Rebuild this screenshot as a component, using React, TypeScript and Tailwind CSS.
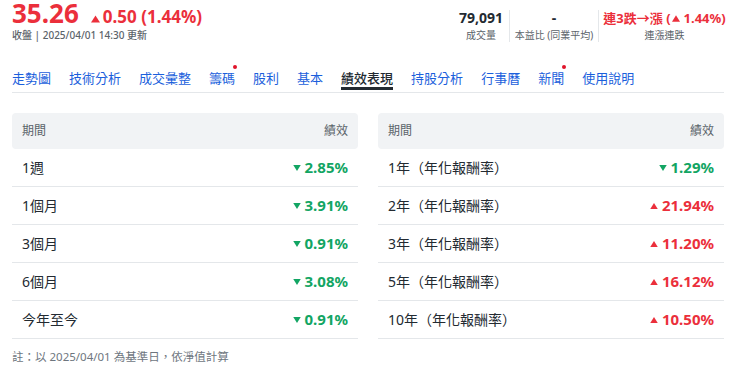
import React from "react";

const TABS = [
  { label: "走勢圖" },
  { label: "技術分析" },
  { label: "成交彙整" },
  { label: "籌碼", dot: true },
  { label: "股利" },
  { label: "基本" },
  { label: "績效表現", active: true },
  { label: "持股分析" },
  { label: "行事曆" },
  { label: "新聞", dot: true },
  { label: "使用說明" },
];

const LEFT_ROWS = [
  { period: "1週", value: "2.85%", up: false },
  { period: "1個月", value: "3.91%", up: false },
  { period: "3個月", value: "0.91%", up: false },
  { period: "6個月", value: "3.08%", up: false },
  { period: "今年至今", value: "0.91%", up: false },
];

const RIGHT_ROWS = [
  { period: "1年（年化報酬率）", value: "1.29%", up: false },
  { period: "2年（年化報酬率）", value: "21.94%", up: true },
  { period: "3年（年化報酬率）", value: "11.20%", up: true },
  { period: "5年（年化報酬率）", value: "16.12%", up: true },
  { period: "10年（年化報酬率）", value: "10.50%", up: true },
];

function Tri({ up, className }: { up: boolean; className?: string }) {
  return (
    <svg viewBox="0 0 10 8" className={className} fill="currentColor">
      {up ? <path d="M5 0L10 8H0z" /> : <path d="M0 0h10L5 8z" />}
    </svg>
  );
}

function PerfTable({ rows }: { rows: { period: string; value: string; up: boolean }[] }) {
  return (
    <div>
      <div className="flex items-center justify-between h-[36px] px-[10px] rounded-[4px] bg-[#f1f3f5] text-[12px] text-[#5b636a]">
        <span>期間</span>
        <span>績效</span>
      </div>
      {rows.map((r) => (
        <div
          key={r.period}
          className="flex items-center justify-between h-[38px] px-[10px] border-b border-[#e4e7ea]"
        >
          <span className="text-[14px] text-[#232a31]">{r.period}</span>
          <span
            className={`flex items-center gap-[4px] text-[15px] font-bold ${
              r.up ? "text-[#eb2f3b]" : "text-[#12a563]"
            }`}
          >
            <Tri up={r.up} className="w-[8px] h-[6px]" />
            {r.value}
          </span>
        </div>
      ))}
    </div>
  );
}

export default function App() {
  return (
    <div
      className="w-[740px] h-[389px] bg-white pl-3 pr-4"
      style={{ fontFamily: '"Noto Sans", "Noto Sans CJK TC", sans-serif' }}
    >
      {/* Quote header */}
      <div className="flex justify-between items-start h-[52px]">
        <div>
          <div className="flex items-baseline h-[26px] text-[#eb2f3b] font-bold">
            <span className="text-[26px] leading-[26px]">35.26</span>
            <span className="ml-[12px] flex items-baseline text-[17px] leading-[16px]">
              <Tri up className="w-[9px] h-[8px] mr-[3px]" />
              0.50 (1.44%)
            </span>
          </div>
          <div className="mt-[2px] text-[10px] leading-[14px] text-[#5b636a] font-medium">
            收盤 | 2025/04/01 14:30 更新
          </div>
        </div>

        <div className="flex mt-[10px]">
          <div className="w-[56px] flex flex-col items-center">
            <span className="text-[14px] leading-[16px] font-bold text-[#232a31]">79,091</span>
            <span className="mt-[3px] text-[10px] leading-[13px] text-[#5b636a]">成交量</span>
          </div>
          <div className="w-[89px] flex flex-col items-center border-l border-[#e4e7ea]">
            <span className="text-[14px] leading-[16px] font-bold text-[#232a31]">-</span>
            <span className="mt-[3px] text-[10px] leading-[13px] text-[#5b636a]">本益比 (同業平均)</span>
          </div>
          <div className="w-[126px] pl-[6px] flex flex-col items-center border-l border-[#e4e7ea]">
            <span className="flex items-center whitespace-nowrap text-[13px] leading-[16px] font-bold text-[#eb2f3b]">
              連3跌→漲 (
              <Tri up className="w-[8px] h-[7px] ml-[1px] mr-[4px]" />
              1.44%)
            </span>
            <span className="mt-[3px] text-[10px] leading-[13px] text-[#5b636a]">連漲連跌</span>
          </div>
        </div>
      </div>

      {/* Tabs */}
      <nav className="flex gap-[18px] h-[41px] border-b border-[#e4e7ea]">
        {TABS.map((t) => (
          <div key={t.label} className="relative h-full flex items-end pb-[4px]">
            <span
              className={`text-[13px] leading-[20px] ${
                t.active ? "text-[#232a31] font-medium" : "text-[#1b5fdc]"
              }`}
            >
              {t.label}
            </span>
            {t.dot && (
              <span className="absolute right-[-2px] top-[13px] w-[4px] h-[4px] rounded-full bg-[#e0142a]" />
            )}
            {t.active && (
              <span className="absolute left-0 right-0 bottom-[2px] h-[3px] bg-[#232a31]" />
            )}
          </div>
        ))}
      </nav>

      {/* Performance tables */}
      <div className="grid grid-cols-2 gap-5 mt-5">
        <PerfTable rows={LEFT_ROWS} />
        <PerfTable rows={RIGHT_ROWS} />
      </div>

      <p className="mt-[9px] text-[11.5px] leading-[18px] text-[#6e767e]">
        註：以 2025/04/01 為基準日，依淨值計算
      </p>
    </div>
  );
}
